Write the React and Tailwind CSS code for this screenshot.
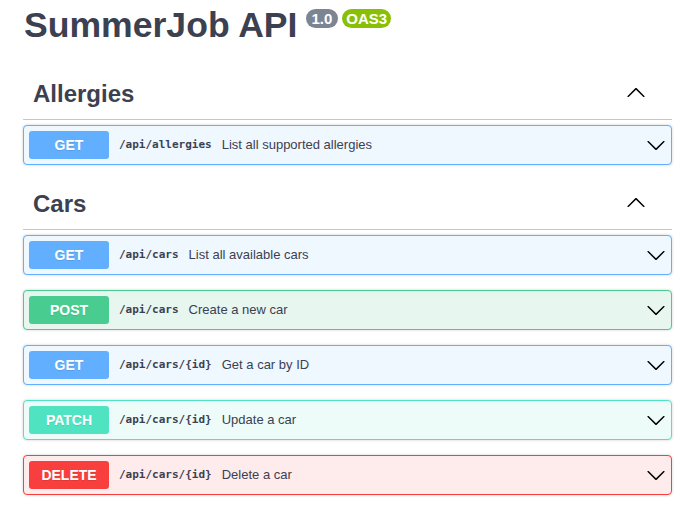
import React from 'react';

const METHODS = {
  GET: { btn: 'bg-[#61affe]', block: 'bg-[#eff7ff] border-[#61affe]' },
  POST: { btn: 'bg-[#49cc90]', block: 'bg-[#e8f6f0] border-[#49cc90]' },
  PATCH: { btn: 'bg-[#50e3c2]', block: 'bg-[#edfcf9] border-[#50e3c2]' },
  DELETE: { btn: 'bg-[#f93e3e]', block: 'bg-[#feebeb] border-[#f93e3e]' },
};

const TAGS = [
  {
    name: 'Allergies',
    ops: [{ method: 'GET', path: '/api/allergies', summary: 'List all supported allergies' }],
  },
  {
    name: 'Cars',
    ops: [
      { method: 'GET', path: '/api/cars', summary: 'List all available cars' },
      { method: 'POST', path: '/api/cars', summary: 'Create a new car' },
      { method: 'GET', path: '/api/cars/{id}', summary: 'Get a car by ID' },
      { method: 'PATCH', path: '/api/cars/{id}', summary: 'Update a car' },
      { method: 'DELETE', path: '/api/cars/{id}', summary: 'Delete a car' },
    ],
  },
];

function Arrow({ up, className = '' }) {
  return (
    <svg width="20" height="20" viewBox="0 0 20 20" className={`shrink-0 ${up ? 'rotate-180' : ''} ${className}`}>
      <path
        fill="#000"
        d="M17.418 6.109c.272-.268.709-.268.979 0s.271.701 0 .969l-7.908 7.83c-.27.268-.707.268-.979 0l-7.908-7.83c-.27-.268-.27-.701 0-.969.271-.268.709-.268.979 0L10 13.25l7.418-7.141z"
      />
    </svg>
  );
}

function Operation({ method, path, summary }) {
  const m = METHODS[method];
  return (
    <div className={`mb-[15px] flex h-[40px] items-center rounded-[4px] border p-[5px] shadow-[0_0_3px_rgba(0,0,0,0.19)] ${m.block}`}>
      <span
        className={`flex h-[28px] w-[80px] shrink-0 items-center justify-center rounded-[3px] pt-[1px] text-[14px] font-bold text-white [text-shadow:0_1px_0_rgba(0,0,0,0.1)] ${m.btn}`}
      >
        {method}
      </span>
      <span className="px-[10px] font-['DejaVu_Sans_Mono',monospace] text-[11px] font-semibold text-[#3b4151]">{path}</span>
      <span className="flex-1 text-[13px] text-[#3b4151]">{summary}</span>
      <Arrow />
    </div>
  );
}

export default function App() {
  return (
    <div className="min-h-[505px] bg-white font-['Liberation_Sans',Arial,sans-serif] text-[#3b4151]">
      <div className="ml-[23px] w-[649px]">
        <div className="mb-[24px] flex items-start pl-[1px] pt-[5px]">
          <h1 className="text-[35.6px] font-bold leading-[41px] text-[#3b4151]">SummerJob API</h1>
          <span className="ml-[8px] mt-[4px] rounded-full bg-[#7d8492] px-[6px] py-[1px] text-[15px] font-bold leading-[17px] text-white">
            1.0
          </span>
          <span className="ml-[4px] mt-[4px] rounded-full bg-[#89bf04] px-[4px] py-[1px] text-[15px] font-bold leading-[17px] text-white">
            OAS3
          </span>
        </div>
        {TAGS.map((tag) => (
          <div key={tag.name}>
            <h3 className="mb-[5px] flex items-center border-b border-[rgba(59,65,81,0.3)] pb-[11px] pl-[10px] pr-[26px] pt-[9px] text-[24px] font-bold leading-[29px] text-[#3b4151]">
              <span className="flex-1">{tag.name}</span>
              <Arrow up className="mt-[-1px]" />
            </h3>
            {tag.ops.map((op, i) => (
              <Operation key={i} {...op} />
            ))}
          </div>
        ))}
      </div>
    </div>
  );
}
